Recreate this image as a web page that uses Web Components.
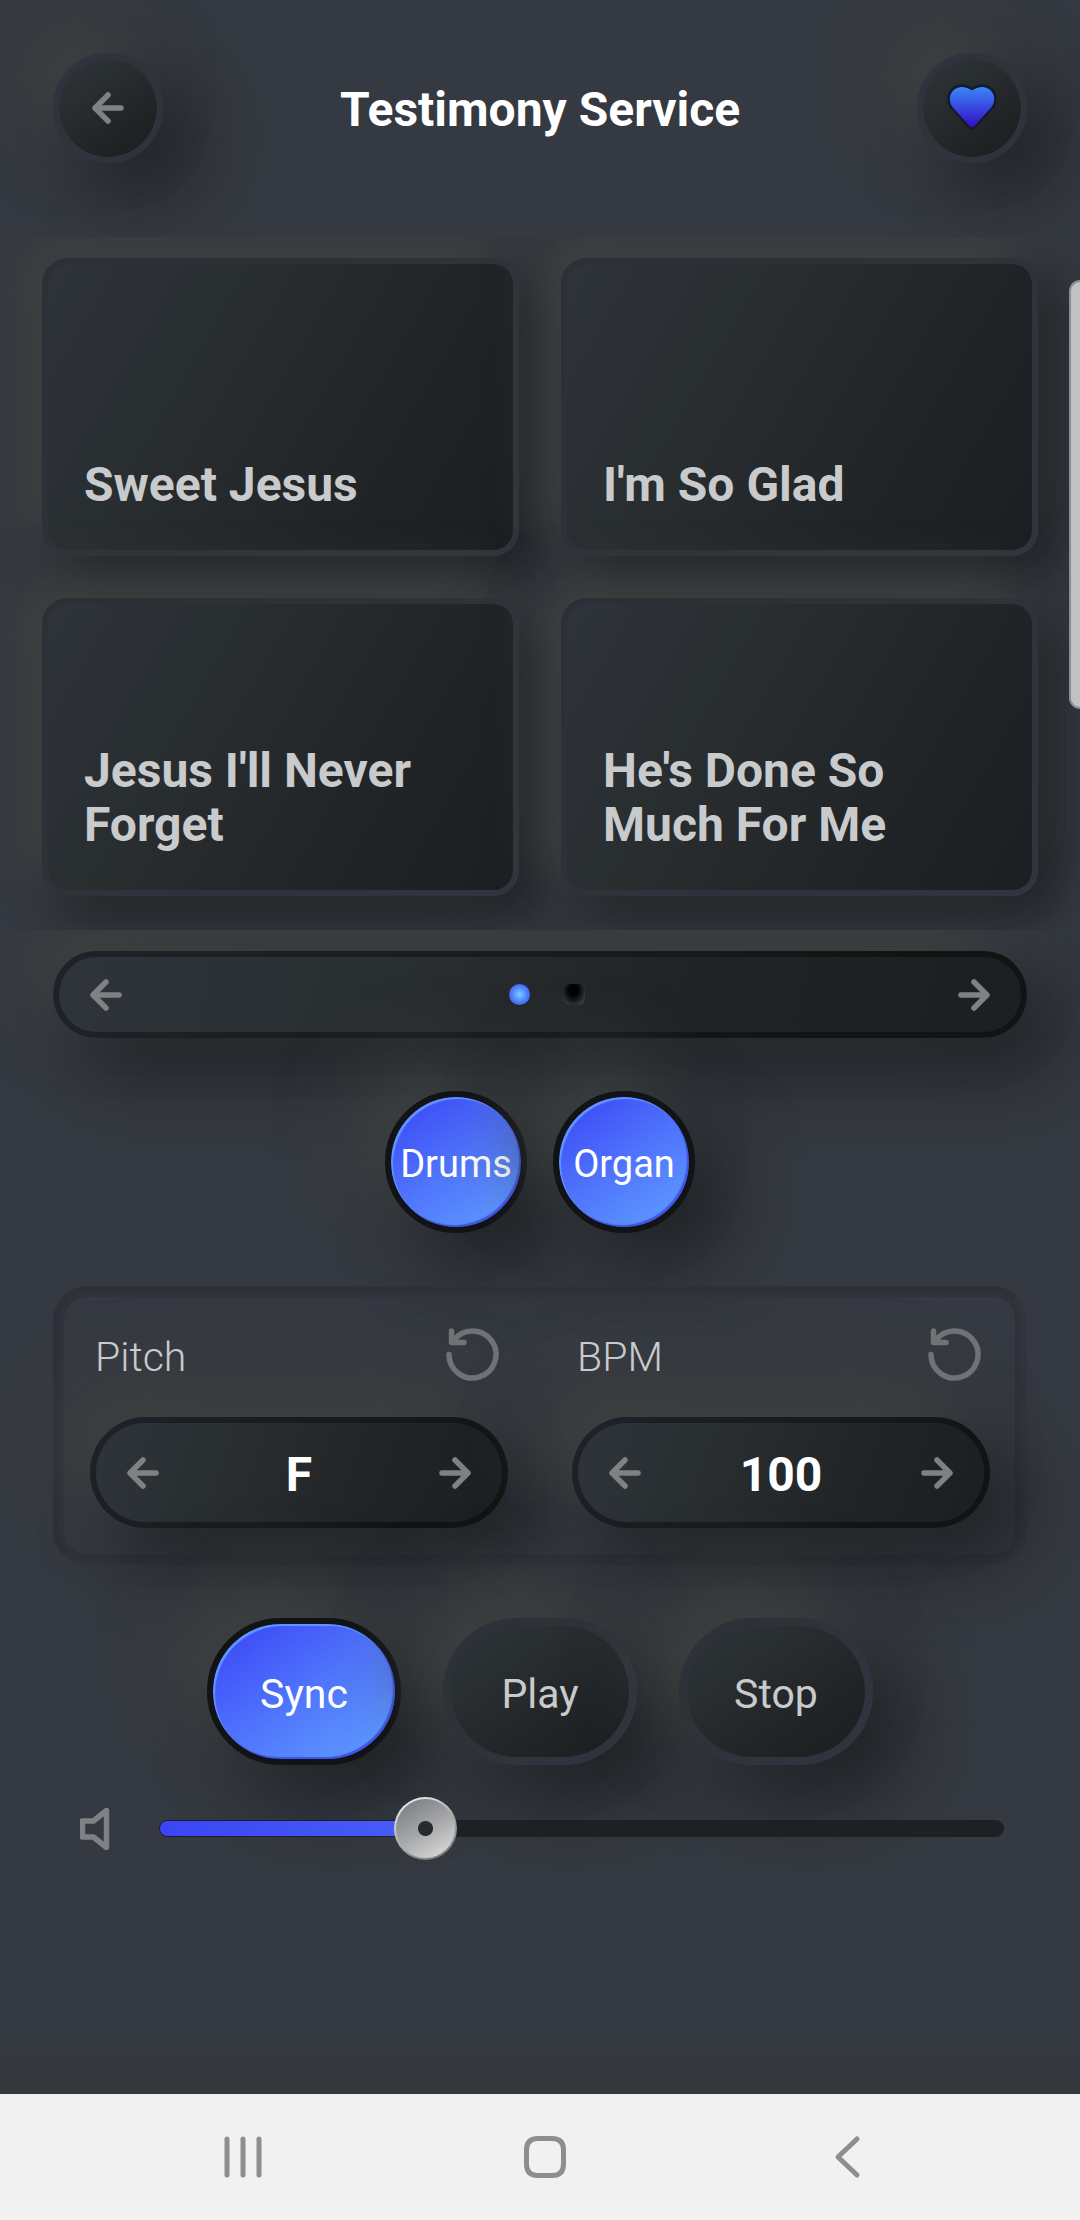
<!DOCTYPE html>
<html lang="en">
<head>
<meta charset="utf-8">
<meta name="viewport" content="width=device-width, initial-scale=1">
<title>Testimony Service</title>
<style>
  :root {
    --surface: linear-gradient(145deg, #2f343a 0%, #292e31 30%, #212427 70%, #1c1f21 100%);
    --rim: #31333c;
    --rim-dark: linear-gradient(135deg, #1e232a 0%, #181b1d 50%, #131313 80%);
    --muted: #7f8284;
    --text: #c9cacc;
    --raised: -30px -30px 76px rgba(66, 70, 64, .75), 30px 30px 76px rgba(24, 28, 30, .85);
  }

  html, body {
    margin: 0;
  }

  body {
    font-family: Roboto, "Liberation Sans", sans-serif;
    color: var(--text);
    background: #353941;
  }
</style>
</head>
<body>
<music-app></music-app>

<script>
const ICONS = {
  back: '<svg width="32" height="32" viewBox="0 0 32 32"><path d="M29 16H3.500M16 3L3 16L16 29"/></svg>',
  next: '<svg width="32" height="32" viewBox="0 0 32 32"><path d="M3 16H28.500M16 3L29 16L16 29"/></svg>',
  reload: '<svg width="53" height="53" viewBox="0 0 53 53"><path d="M3 26.500A23.500 23.500 0 1 0 8 12M5.500 3V14.500H18"/></svg>',
  speaker: '<svg width="30" height="42" viewBox="0 0 30 42"><path d="M2.500 13H13.500L26.500 2.500V39.500L13.500 29H2.500Z"/></svg>',
  heart: `<svg width="52" height="50" viewBox="0 0 52 50">
    <defs><linearGradient id="g" x1="0" y1="0" x2="0" y2="1">
      <stop offset="0" stop-color="#3b8bfb"/><stop offset="1" stop-color="#3408c4"/>
    </linearGradient></defs>
    <path style="fill:url(#g);stroke:#131a2b;stroke-width:2.500" d="M26 6C21 2.500 13 1 7.500 5.500C1 11 1 20 6.500 26L22.500 43.500Q26 47.500 29.500 43.500L45.500 26C51 20 51 11 44.500 5.500C39 1 31 2.500 26 6Z"/>
  </svg>`
};

const BASE = `
  * { box-sizing: border-box; }
  button {
    margin: 0;
    padding: 0;
    border: 0;
    background: none;
    color: inherit;
    font: inherit;
    cursor: pointer;
  }
  svg { display: block; }
  svg path {
    fill: none;
    stroke: var(--muted);
    stroke-width: 5.500;
    stroke-linecap: round;
    stroke-linejoin: round;
  }
`;

function render(el, css, html) {
  const template = document.createElement('template');
  template.innerHTML = `<style>${BASE}${css}</style>${html}`;
  el.attachShadow({ mode: 'open' });
  el.shadowRoot.appendChild(template.content.cloneNode(true));
}

class RoundButton extends HTMLElement {
  constructor() {
    super();
    render(this, `
      :host { display: block; }
      button {
        display: grid;
        place-items: center;
        width: 110px;
        height: 110px;
        border: 6px solid var(--rim);
        border-radius: 50%;
        background: var(--surface) padding-box;
        box-shadow: var(--raised);
      }
    `, `<button type="button" aria-label="${this.getAttribute('label')}">${ICONS[this.getAttribute('icon')]}</button>`);
  }
}

class AppHeader extends HTMLElement {
  constructor() {
    super();
    render(this, `
      :host {
        display: block;
        overflow: hidden;
        padding: 53px 53px 74px;
      }
      header {
        display: flex;
        align-items: center;
        justify-content: space-between;
      }
      h1 {
        margin: 0;
        padding-top: 4px;
        font-size: 48px;
        line-height: 54px;
        font-weight: 700;
        color: #fff;
      }
    `, `
      <header>
        <round-button icon="back" label="Back"></round-button>
        <h1><slot></slot></h1>
        <round-button icon="heart" label="Favourite"></round-button>
      </header>
    `);
  }
}

class SongCard extends HTMLElement {
  constructor() {
    super();
    render(this, `
      :host { display: block; }
      button {
        display: flex;
        align-items: flex-end;
        width: 100%;
        height: 298px;
        padding: 36px 36px 38px;
        border: 6px solid transparent;
        border-radius: 26px;
        background:
          linear-gradient(120deg, #2f333b 0%, #292e31 30%, #212427 72%, #1c1f21 100%) padding-box,
          linear-gradient(145deg, #2c2f36, #33353e) border-box;
        box-shadow: -18px -18px 50px rgba(66, 70, 66, .8), 18px 18px 50px rgba(24, 28, 30, .85);
        font-size: 48px;
        line-height: 54px;
        font-weight: 700;
        text-align: left;
      }
    `, `<button type="button"><span><slot></slot></span></button>`);
  }
}

class SongGrid extends HTMLElement {
  constructor() {
    super();
    render(this, `
      :host {
        display: grid;
        grid-template-columns: 1fr 1fr;
        gap: 42px;
        overflow: hidden;
        padding: 21px 42px 34px;
      }
    `, `<slot></slot>`);
  }
}

class SongPager extends HTMLElement {
  constructor() {
    super();
    render(this, `
      :host {
        display: flex;
        align-items: center;
        justify-content: space-between;
        height: 87px;
        padding: 0 31px;
        border: 6px solid transparent;
        border-radius: 44px;
        background:
          linear-gradient(100deg, #2f343a 0%, #292e31 35%, #212427 65%, #1c1f21 100%) padding-box,
          var(--rim-dark) border-box;
        box-shadow: var(--raised);
      }
      .dots { display: flex; }
      .dots button {
        width: 21px;
        height: 21px;
        margin: 0 10px 0 24px;
        background: radial-gradient(ellipse at 45% 30%, #000 25%, #1c1e20 55%, #3a3c3e 80%, transparent 100%);
        border-radius: 6px;
      }
      .dots .on {
        border-radius: 50%;
        background: radial-gradient(#77d2ff 0%, #5a93ff 40%, #4055f5 80%);
      }
    `, `
      <button type="button" aria-label="Previous page">${ICONS.back}</button>
      <div class="dots">
        <button type="button" class="on" aria-label="Page 1"></button>
        <button type="button" aria-label="Page 2"></button>
      </div>
      <button type="button" aria-label="Next page">${ICONS.next}</button>
    `);
  }
}

// Pill or circle with a text label; "active" switches it to the blue face
class PadButton extends HTMLElement {
  constructor() {
    super();
    const active = this.hasAttribute('active');
    render(this, `
      :host {
        display: block;
        width: 194px;
        height: 147px;
      }
      :host([round]) {
        width: 142px;
        height: 142px;
      }
      button {
        width: 100%;
        height: 100%;
        padding-top: 4px;
        border: 8px solid transparent;
        border-radius: 74px;
        background:
          var(--surface) padding-box,
          linear-gradient(135deg, #2d3238 25%, #32333e 70%) border-box;
        box-shadow: var(--raised);
        font-size: 41px;
        white-space: nowrap;
      }
      :host([round]) button { font-size: 38px; }
      button[aria-pressed="true"] {
        border: 6px solid #111317;
        background: linear-gradient(145deg, #3e4df7 10%, #4f74fc 50%, #5f9bff 95%) padding-box;
        box-shadow:
          inset 2px 2px 1px #6096ff,
          inset -2px -2px 1px #4053ea,
          var(--raised);
        color: #fff;
      }
    `, `<button type="button" aria-pressed="${active}"><slot></slot></button>`);
  }
}

class ValueStepper extends HTMLElement {
  constructor() {
    super();
    const label = this.getAttribute('label');
    render(this, `
      :host { display: block; }
      .top {
        display: flex;
        align-items: center;
        justify-content: space-between;
        height: 63px;
        margin-bottom: 31px;
        padding: 0 9px 0 5px;
      }
      .top path { stroke: #707276; }
      label {
        padding-top: 4px;
        font-size: 41px;
        font-weight: 300;
      }
      .pill {
        display: flex;
        align-items: center;
        justify-content: space-between;
        height: 111px;
        padding: 0 31px;
        border: 6px solid transparent;
        border-radius: 56px;
        background:
          linear-gradient(110deg, #2f343a 0%, #292e31 30%, #212427 70%, #1c1f21 100%) padding-box,
          var(--rim-dark) border-box;
        box-shadow: var(--raised);
      }
      output {
        padding-top: 4px;
        font-size: 48px;
        font-weight: 700;
        color: #fff;
      }
    `, `
      <div class="top">
        <label for="value">${label}</label>
        <button type="button" aria-label="Reset ${label}">${ICONS.reload}</button>
      </div>
      <div class="pill">
        <button type="button" aria-label="${label} down">${ICONS.back}</button>
        <output id="value">${this.getAttribute('value')}</output>
        <button type="button" aria-label="${label} up">${ICONS.next}</button>
      </div>
    `);
  }
}

class SettingsPanel extends HTMLElement {
  constructor() {
    super();
    render(this, `
      :host {
        display: grid;
        grid-template-columns: 1fr 1fr;
        gap: 64px;
        padding: 31px;
        border: 6px solid;
        border-color: #2f3139 #32353d #31343c #2d3038;
        border-radius: 34px;
        box-shadow:
          inset 0 0 0 5px #30333b,
          inset -4px 0 0 2px #2e3038;
      }
    `, `<slot></slot>`);
  }
}

class VolumeSlider extends HTMLElement {
  constructor() {
    super();
    render(this, `
      :host {
        display: flex;
        align-items: center;
        gap: 49px;
        padding: 0 23px 0 27px;
      }
      label { flex: none; }
      input {
        --fill: calc(32px + (100% - 63px) * .3);
        -webkit-appearance: none;
        appearance: none;
        flex: 1;
        min-width: 0;
        height: 63px;
        margin: 0;
        background: none;
      }
      input::-webkit-slider-runnable-track {
        height: 17px;
        border: 1px solid #1c1f26;
        border-radius: 9px;
        background:
          linear-gradient(90deg, #3c45f4, #465ff9) 0 0 / var(--fill) 100% no-repeat,
          #1e2123;
      }
      input::-webkit-slider-thumb {
        -webkit-appearance: none;
        width: 63px;
        height: 63px;
        margin-top: -24px;
        border: 2px solid transparent;
        border-radius: 50%;
        background:
          radial-gradient(circle, #262b30 7px, transparent 8px) padding-box,
          linear-gradient(150deg, #7d8085 10%, #a5a6a8 50%, #dcdcdc 95%) padding-box,
          linear-gradient(150deg, #ececec 10%, #b0b0b0 50%, #6f6f6f 95%) border-box;
      }
    `, `
      <label for="volume" aria-label="Volume">${ICONS.speaker}</label>
      <input id="volume" type="range" min="0" max="100" value="30">
    `);
    const input = this.shadowRoot.querySelector('input');
    input.addEventListener('input', () => {
      input.style.setProperty('--fill', `calc(32px + (100% - 63px) * ${input.value / 100})`);
    });
  }
}

class SystemNav extends HTMLElement {
  constructor() {
    super();
    render(this, `
      :host { display: block; }
      nav {
        display: grid;
        grid-template-columns: repeat(3, 1fr);
        height: 126px;
        padding: 0 82px 0 92px;
        background: #f1f1f1;
      }
      button {
        display: grid;
        place-items: center;
      }
      svg path { stroke: #8e8e8e; stroke-width: 5; }
    `, `
      <nav aria-label="System">
        <button type="button" aria-label="Recents"><svg width="44" height="44" viewBox="0 0 44 44"><path d="M6 4V40M22 4V40M38 4V40"/></svg></button>
        <button type="button" aria-label="Home"><svg width="44" height="44" viewBox="0 0 44 44"><path d="M15 3.500H29Q40.500 3.500 40.500 15V29Q40.500 40.500 29 40.500H15Q3.500 40.500 3.500 29V15Q3.500 3.500 15 3.500Z"/></svg></button>
        <button type="button" aria-label="Back"><svg width="44" height="44" viewBox="0 0 44 44"><path d="M32 4L13 22L32 40"/></svg></button>
      </nav>
    `);
  }
}

class MusicApp extends HTMLElement {
  constructor() {
    super();
    render(this, `
      :host {
        position: relative;
        display: flex;
        flex-direction: column;
        min-height: 100vh;
      }
      main {
        display: flex;
        flex: 1;
        flex-direction: column;
        gap: 53px;
        overflow: hidden;
        padding: 21px 53px 53px;
        background: linear-gradient(transparent 95%, #34383b);
      }
      .row {
        display: flex;
        justify-content: center;
        gap: 26px;
      }
      .transport { gap: 42px; }
      volume-slider { margin-top: -21px; }
      .edge {
        position: absolute;
        top: 280px;
        right: 0;
        width: 11px;
        height: 429px;
        border: 2px solid #8b8c8d;
        border-right: 0;
        border-radius: 13px 0 0 13px;
        background: #c1c1c2;
      }
    `, `
      <app-header>Testimony Service</app-header>
      <song-grid>
        <song-card>Sweet Jesus</song-card>
        <song-card>I'm So Glad</song-card>
        <song-card>Jesus I'll Never Forget</song-card>
        <song-card>He's Done So Much For Me</song-card>
      </song-grid>
      <main>
        <song-pager></song-pager>
        <div class="row">
          <pad-button round active>Drums</pad-button>
          <pad-button round active>Organ</pad-button>
        </div>
        <settings-panel>
          <value-stepper label="Pitch" value="F"></value-stepper>
          <value-stepper label="BPM" value="100"></value-stepper>
        </settings-panel>
        <div class="row transport">
          <pad-button active>Sync</pad-button>
          <pad-button>Play</pad-button>
          <pad-button>Stop</pad-button>
        </div>
        <volume-slider></volume-slider>
      </main>
      <system-nav></system-nav>
      <div class="edge"></div>
    `);
  }
}

customElements.define('round-button', RoundButton);
customElements.define('app-header', AppHeader);
customElements.define('song-card', SongCard);
customElements.define('song-grid', SongGrid);
customElements.define('song-pager', SongPager);
customElements.define('pad-button', PadButton);
customElements.define('value-stepper', ValueStepper);
customElements.define('settings-panel', SettingsPanel);
customElements.define('volume-slider', VolumeSlider);
customElements.define('system-nav', SystemNav);
customElements.define('music-app', MusicApp);
</script>
</body>
</html>
